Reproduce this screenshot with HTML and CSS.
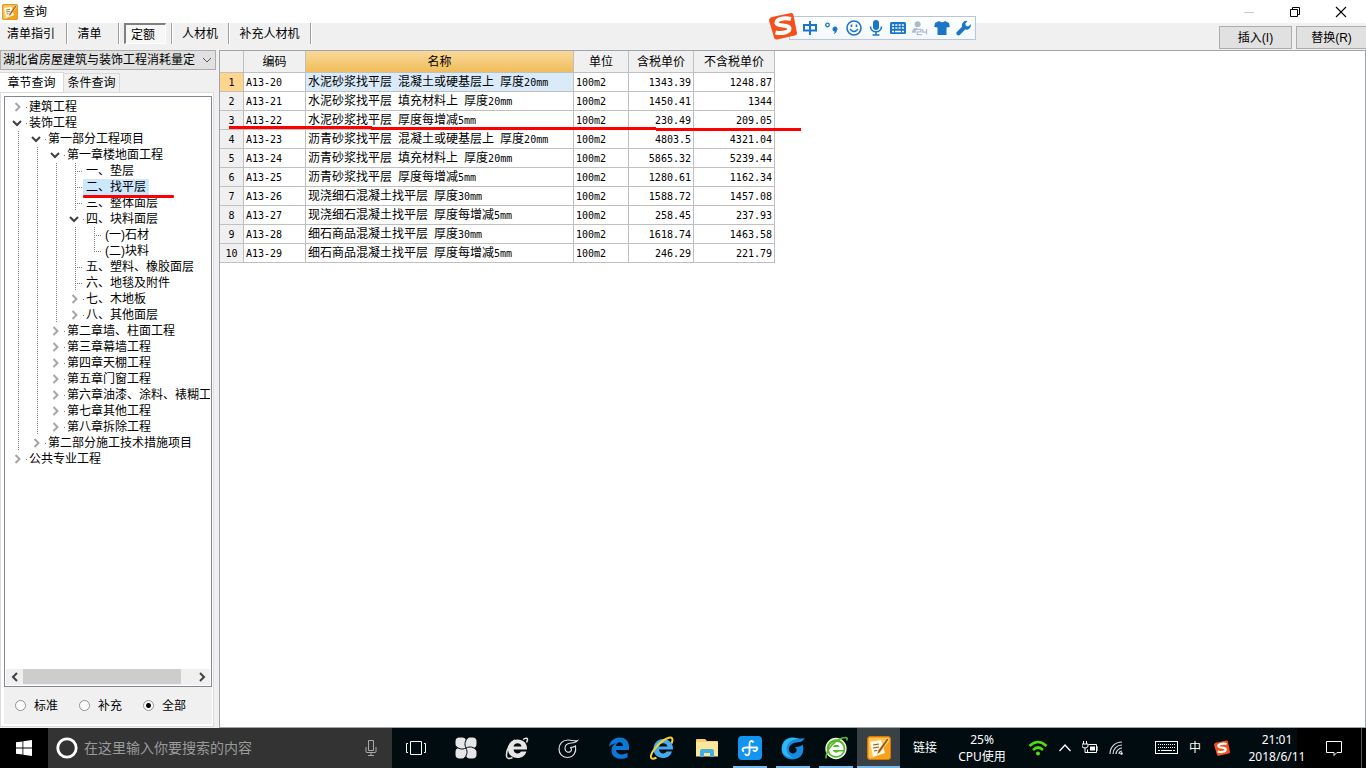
FILE: index.html
```html
<!DOCTYPE html>
<html lang="zh-CN">
<head>
<meta charset="utf-8">
<title>查询</title>
<link rel="stylesheet" href="styles.css">
</head>
<body>
<svg class="defs" aria-hidden="true">
  <symbol id="open" viewBox="0 0 10 10"><path d="M1 3l4 4 4-4" fill="none" stroke="#404040" stroke-width="2"/></symbol>
  <symbol id="shut" viewBox="0 0 10 10"><path d="M3.5 1l4 4-4 4" fill="none" stroke="#a6a6a6" stroke-width="2"/></symbol>
  <symbol id="sogou" viewBox="0 0 28 28">
    <path d="M3 5L22 1q2-.3 2.500 2L28 21q.3 2-2 2.500L8 27.500q-2.500.500-3-2L0 8.500Q0 6 3 5z" fill="#f4511e"/>
    <path d="M22 7c-6-1.500-14-.5-14.500 3.500-.5 4 13 2 13 6 0 4-8 5.500-14 4" fill="none" stroke="#fff" stroke-width="4"/>
  </symbol>
  <symbol id="note" viewBox="0 0 24 24">
    <rect x="0.500" y="0.500" width="23" height="23" rx="2.500" fill="#f7a21b" stroke="#d87508"/>
    <path d="M2 2h20v4L6 22H2z" fill="#ffc550"/>
    <path d="M3 6l11-2 4 13-12 4z" fill="#fffbe8"/>
    <path d="M6 9l6-1M6 12l6-1M7 15l3-.5" stroke="#8c5a20" stroke-width="1.200"/>
    <path d="M20 2l2 1.500-9 13-3 2 1-4z" fill="#9b5a1c" stroke="#fff0b8" stroke-width=".7"/>
  </symbol>
</svg>

<header class="titlebar">
  <svg class="app-icon"><use href="#note"/></svg>
  <h1>查询</h1>
  <div class="win-buttons">
    <button aria-label="最小化"><svg viewBox="0 0 12 12"><path d="M1 6.500h10" stroke="#c8c8c8"/></svg></button>
    <button aria-label="还原"><svg viewBox="0 0 12 12"><path d="M1.500 3.500h7v7h-7zM3.500 3.500v-2h7v7h-2" fill="none" stroke="#000"/></svg></button>
    <button aria-label="关闭"><svg viewBox="0 0 12 12"><path d="M1 1l10 10M11 1L1 11" stroke="#000" stroke-width="1.100"/></svg></button>
  </div>
</header>

<nav class="toolbar">
  <button class="mode wide">清单指引</button>
  <button class="mode">清单</button>
  <button class="mode pressed"><span>定额</span></button>
  <button class="mode third">人材机</button>
  <button class="mode last">补充人材机</button>
  <div class="actions">
    <button class="action">插入(I)</button>
    <button class="action">替换(R)</button>
  </div>
</nav>

<main class="main">
  <aside class="sidebar">
    <select class="library" aria-label="定额库"><option>湖北省房屋建筑与装饰工程消耗量定</option></select>
    <div class="tabs">
      <button class="tab active">章节查询</button><button class="tab">条件查询</button>
    </div>
    <section class="panel">
      <div class="tree-box">
        <ul class="tree">
          <li><div class="row"><svg><use href="#shut"/></svg><span>建筑工程</span></div></li>
          <li><div class="row"><svg><use href="#open"/></svg><span>装饰工程</span></div>
            <ul>
              <li><div class="row"><svg><use href="#open"/></svg><span>第一部分工程项目</span></div>
                <ul>
                  <li><div class="row"><svg><use href="#open"/></svg><span>第一章楼地面工程</span></div>
                    <ul>
                      <li><div class="row leaf"><span>一、垫层</span></div></li>
                      <li><div class="row leaf selected"><span>二、找平层</span><i class="mark"></i></div></li>
                      <li><div class="row leaf"><span>三、整体面层</span></div></li>
                      <li><div class="row"><svg><use href="#open"/></svg><span>四、块料面层</span></div>
                        <ul>
                          <li><div class="row leaf"><span>(一)石材</span></div></li>
                          <li><div class="row leaf end"><span>(二)块料</span></div></li>
                        </ul>
                      </li>
                      <li><div class="row leaf"><span>五、塑料、橡胶面层</span></div></li>
                      <li><div class="row leaf"><span>六、地毯及附件</span></div></li>
                      <li><div class="row"><svg><use href="#shut"/></svg><span>七、木地板</span></div></li>
                      <li><div class="row"><svg><use href="#shut"/></svg><span>八、其他面层</span></div></li>
                    </ul>
                  </li>
                  <li><div class="row"><svg><use href="#shut"/></svg><span>第二章墙、柱面工程</span></div></li>
                  <li><div class="row"><svg><use href="#shut"/></svg><span>第三章幕墙工程</span></div></li>
                  <li><div class="row"><svg><use href="#shut"/></svg><span>第四章天棚工程</span></div></li>
                  <li><div class="row"><svg><use href="#shut"/></svg><span>第五章门窗工程</span></div></li>
                  <li><div class="row"><svg><use href="#shut"/></svg><span>第六章油漆、涂料、裱糊工</span></div></li>
                  <li><div class="row"><svg><use href="#shut"/></svg><span>第七章其他工程</span></div></li>
                  <li><div class="row"><svg><use href="#shut"/></svg><span>第八章拆除工程</span></div></li>
                </ul>
              </li>
              <li><div class="row"><svg><use href="#shut"/></svg><span>第二部分施工技术措施项目</span></div></li>
            </ul>
          </li>
          <li><div class="row"><svg><use href="#shut"/></svg><span>公共专业工程</span></div></li>
        </ul>
        <div class="scrollbar">
          <button aria-label="向左"><svg viewBox="0 0 10 10"><path d="M7 1L3 5l4 4" fill="none" stroke="#404040" stroke-width="2"/></svg></button>
          <div class="track"><div class="thumb"></div></div>
          <button aria-label="向右"><svg viewBox="0 0 10 10"><path d="M3 1l4 4-4 4" fill="none" stroke="#404040" stroke-width="2"/></svg></button>
        </div>
      </div>
      <div class="filters">
        <label><input type="radio" name="scope">标准</label>
        <label><input type="radio" name="scope">补充</label>
        <label><input type="radio" name="scope" checked>全部</label>
      </div>
    </section>
  </aside>

  <section class="content">
    <div class="grid-wrap">
      <table class="grid">
        <colgroup><col class="c-no"><col class="c-code"><col class="c-name"><col class="c-unit"><col class="c-p1"><col class="c-p2"></colgroup>
        <thead><tr><th></th><th>编码</th><th class="sorted">名称</th><th>单位</th><th>含税单价</th><th>不含税单价</th></tr></thead>
        <tbody>
          <tr class="current"><th>1</th><td>A13-20</td><td><b>水泥砂浆找平层</b> <b>混凝土或硬基层上</b> <b>厚度</b>20mm</td><td>100m2</td><td>1343.39</td><td>1248.87</td></tr>
          <tr><th>2</th><td>A13-21</td><td><b>水泥砂浆找平层</b> <b>填充材料上</b> <b>厚度</b>20mm</td><td>100m2</td><td>1450.41</td><td>1344</td></tr>
          <tr><th>3</th><td>A13-22</td><td><b>水泥砂浆找平层</b> <b>厚度每增减</b>5mm</td><td>100m2</td><td>230.49</td><td>209.05</td></tr>
          <tr><th>4</th><td>A13-23</td><td><b>沥青砂浆找平层</b> <b>混凝土或硬基层上</b> <b>厚度</b>20mm</td><td>100m2</td><td>4803.5</td><td>4321.04</td></tr>
          <tr><th>5</th><td>A13-24</td><td><b>沥青砂浆找平层</b> <b>填充材料上</b> <b>厚度</b>20mm</td><td>100m2</td><td>5865.32</td><td>5239.44</td></tr>
          <tr><th>6</th><td>A13-25</td><td><b>沥青砂浆找平层</b> <b>厚度每增减</b>5mm</td><td>100m2</td><td>1280.61</td><td>1162.34</td></tr>
          <tr><th>7</th><td>A13-26</td><td><b>现浇细石混凝土找平层</b> <b>厚度</b>30mm</td><td>100m2</td><td>1588.72</td><td>1457.08</td></tr>
          <tr><th>8</th><td>A13-27</td><td><b>现浇细石混凝土找平层</b> <b>厚度每增减</b>5mm</td><td>100m2</td><td>258.45</td><td>237.93</td></tr>
          <tr><th>9</th><td>A13-28</td><td><b>细石商品混凝土找平层</b> <b>厚度</b>30mm</td><td>100m2</td><td>1618.74</td><td>1463.58</td></tr>
          <tr><th>10</th><td>A13-29</td><td><b>细石商品混凝土找平层</b> <b>厚度每增减</b>5mm</td><td>100m2</td><td>246.29</td><td>221.79</td></tr>
        </tbody>
      </table>
      <svg class="stroke" viewBox="0 0 574 6"><path d="M1 1.500h143M143 2.500h285M428 3.500h145" stroke="#f00" stroke-width="3"/></svg>
    </div>
  </section>
</main>

<div class="ime">
  <svg class="ime-logo"><use href="#sogou"/></svg>
  <div class="ime-bar">
    <svg viewBox="0 0 16 16"><path d="M2 5h12v5.500H2zM8 1v14" fill="none" stroke="#1b76c8" stroke-width="2"/></svg>
    <svg viewBox="0 0 16 16"><circle cx="3.500" cy="5" r="1.800" fill="none" stroke="#1b76c8" stroke-width="1.300"/><path d="M8.500 9a2.500 2.500 0 1 1 4.500 1.500c-.5 2-1.500 3-3.500 3.500.7-1 1.200-1.500 1.200-2.500-1.200 0-2.200-.8-2.200-2.500z" fill="#1b76c8"/></svg>
    <svg viewBox="0 0 16 16"><circle cx="8" cy="8" r="7" fill="none" stroke="#1b76c8" stroke-width="1.600"/><path d="M5.500 4.500v2.500M10.500 4.500v2.500" stroke="#1b76c8" stroke-width="1.600"/><path d="M4 9q4 5 8 0" fill="none" stroke="#1b76c8" stroke-width="1.400"/></svg>
    <svg viewBox="0 0 16 16"><rect x="5" y="0" width="6" height="10" rx="3" fill="#1b76c8"/><path d="M2.500 6.500c0 7 11 7 11 0M8 12v3M4.500 15h7" fill="none" stroke="#1b76c8" stroke-width="1.600"/></svg>
    <svg viewBox="0 0 16 16"><rect x="0" y="2" width="16" height="12" rx="1.500" fill="#1b76c8"/><path d="M2 5h12M2 8h12" stroke="#fff" stroke-width="1.600" stroke-dasharray="2 1.300"/><path d="M2 11.500h2M5 11.500h6M12 11.500h2" stroke="#fff" stroke-width="1.500"/></svg>
    <svg viewBox="0 0 17 16"><circle cx="6" cy="4" r="3.200" fill="#adb9cf"/><path d="M0 13q0-5 5-5h4v5z" fill="#adb9cf"/><path d="M5.500 9.500h4v2.500h-4v3h5M11.500 9v3.500h4M15.500 9v6" fill="none" stroke="#fff" stroke-width="3"/><path d="M5.500 9.500h4v2.500h-4v3h5M11.500 9v3.500h4M15.500 9v6" fill="none" stroke="#adb9cf" stroke-width="1.300"/></svg>
    <svg viewBox="0 0 16 16"><path d="M5 1q3 2.500 6 0l4 2 .8 4-3.300.5V15h-9V7.500L.2 7 1 3z" fill="#1b76c8"/></svg>
    <svg viewBox="0 0 16 16"><path d="M14.800 4.200l-2.600 2.200-2.300-.6-.6-2.300L11.600 1A4.600 4.600 0 0 0 6 6.700L1 11.800a2 2 0 0 0 3 3L9.200 9.600a4.600 4.600 0 0 0 5.600-5.400z" fill="#1b76c8"/></svg>
  </div>
</div>

<footer class="taskbar">
  <button class="start" aria-label="开始"><svg viewBox="0 0 16 16"><path d="M0 2.300L6.500 1.400v6.200H0zM7.300 1.300L16 0v7.600H7.300zM0 8.400h6.500v6.200L0 13.700zM7.300 8.400H16V16l-8.700-1.300z" fill="#fff"/></svg></button>
  <div class="search">
    <svg class="cortana" viewBox="0 0 22 22"><circle cx="11" cy="11" r="9.200" fill="none" stroke="#fff" stroke-width="2.800"/></svg>
    <input type="text" placeholder="在这里输入你要搜索的内容" aria-label="搜索">
    <svg class="mic" viewBox="0 0 12 18"><path d="M3.500 1.500h5v10h-5zM1 8v4.500q0 1 1 1h8q1 0 1-1V8M6 14v3M3 16.500h6" fill="none" stroke="#aaa"/></svg>
  </div>
  <button class="task view" aria-label="任务视图"><svg viewBox="0 0 22 16"><path d="M5.500 1.500h11v13h-11zM3 3.500H1.500v9H3M19 3.500h1.500v9H19" fill="none" stroke="#fff"/></svg></button>
  <button class="task" aria-label="应用"><svg viewBox="0 0 24 24"><rect x="1.500" y="1.500" width="10.500" height="10.500" rx="4" fill="#e6e6e6"/><rect x="12" y="1.500" width="10.500" height="10.500" rx="4" fill="#e6e6e6"/><rect x="1.500" y="12" width="10.500" height="10.500" rx="4" fill="#e6e6e6"/><rect x="12" y="12" width="10.500" height="10.500" rx="4" fill="#e6e6e6"/><circle cx="12" cy="12" r="5" fill="#e6e6e6"/><path d="M12 12C8 14 4 13 1.500 9.500M12 12C10 8 11 4 14.500 1.500M12 12c4-2 8-1 10.500 2.500M12 12c2 4 1 8-2.500 10.500" fill="none" stroke="#000c10" stroke-width="1"/></svg></button>
  <button class="task" aria-label="浏览器"><svg viewBox="0 0 24 24"><path d="M22 13.500H8.500c.3 4.500 6 5 7.500 2h5.500C20 20 16.500 22 12.500 22 7 22 3 18.500 3 13S7 3.500 12.500 3.500 22.500 7 22 13.500zM8.500 10.500h8c-.3-4.500-7.500-4.500-8 0z" fill="#e6e6e6"/><path d="M18 3.500c2-1.500 4.500-2 4.500 0 0 1-.5 2-1 3M10 4C5 7 1 14 1.500 20c.3 3 3 3 6 1.500" fill="none" stroke="#e6e6e6" stroke-width="1.500"/></svg></button>
  <button class="task" aria-label="加速器"><svg viewBox="0 0 24 24"><path d="M21.500 4.500c-1.500 2-3.500 2.500-6 2.500C11 7 8.500 9.500 9 13c.4 3 3.500 4 5.500 2.500 1.500-1.200 1.200-3.500-.5-4 3 0 4-.5 5.500-1.500 1 6-1.500 11-7.500 11.500C6.500 21.500 3 18 3 13S6.500 4 12 4c4 0 6 1.500 9.500.5z" fill="none" stroke="#dfe2e2" stroke-width="1.200"/></svg></button>
  <button class="task" aria-label="Edge"><svg viewBox="0 0 24 24"><path d="M2 11C3 4 8 1.500 13 1.500c6 0 9 4.500 9 9.500v3H9c.5 5 7 5.500 11.500 2.700v4.500C13 25 4.500 22 4.500 14.500 4.500 11 6.500 8.500 9 7.500 6 7.500 3.500 9 2 11zm7-1h7c0-5-6.500-5-7 0z" fill="#0b78d7"/></svg></button>
  <button class="task ie" aria-label="IE"><svg viewBox="0 0 24 24"><path d="M23 13.500H9c.3 4.500 6 5 7.500 2H22C20.500 20 17 22 13 22 7.500 22 3.500 18.500 3.500 13S7.500 3 13 3 23.500 7 23 13.500zM9 10.500h8.500C17 6 9.500 6 9 10.500z" fill="#45aaf0"/><path d="M21.500 7.500C23.500 3 22.500 0 17 2.500 9 6 0 17 1 21.500c.5 1.800 3 1.300 5.500.3" fill="none" stroke="#f9d030" stroke-width="2"/></svg></button>
  <button class="task small" aria-label="文件夹"><svg viewBox="0 0 24 24"><path d="M1 4q0-1 1-1h8l2 2h10q1 0 1 1v14H1z" fill="#f6cf70"/><path d="M1 6h22v14.500H1z" fill="#fde599"/><path d="M5 21v-6q0-2 2-2h10q2 0 2 2v6h-4v-4H9v4z" fill="#3fb0e0"/></svg></button>
  <button class="task small running" aria-label="计价软件"><svg viewBox="0 0 24 24"><rect width="24" height="24" rx="4" fill="#1295f2"/><path d="M15.500 6.500C14 4 11.500 5 11.500 7.500V16c0 4-4 4-4.500 1.500M19.500 11.500h-11C4 11.500 3.500 14.500 6 15.500M19.500 11.500c0 3.500-3 4.500-4.500 2.500" fill="none" stroke="#fff" stroke-width="1.800"/></svg></button>
  <button class="task small running" aria-label="下载"><svg viewBox="0 0 24 24"><path d="M23.500 2c-1 3.500-4 4-8 4.500C11 7 7.500 10 8 14c.5 3.500 5 4.500 7 2 1.500-2 .5-4-1.500-4.500 3-.5 6.500-1 8-3C24 15 21 23.500 11.500 23.500 5 23.500.5 19 .5 13S4 1.500 11 1.500c5 0 8 2 12.500.5z" fill="#1689e0"/><path d="M5 4c5-3 9-2.500 13-1C9 3 4 9 6 16c1 3 4 5 6 5.500C6 22 1 18 1 13c0-4 1.500-7 4-9z" fill="#2fb9f0"/></svg></button>
  <button class="task small running" aria-label="安全浏览器"><svg viewBox="0 0 24 24"><circle cx="12" cy="12.500" r="10" fill="#58b82c" stroke="#f2fbea" stroke-width="1.300"/><path d="M19.500 14H9c.5 3 4.500 3.500 6 1.500h4c-1 3-4 4.500-7 4.500-4.500 0-7-3-7-7s3-7 7.500-7 7.500 3 7 8zM9 11h6.500c-.5-3-6-3-6.500 0z" fill="#fff"/><path d="M2 22.500C2 13 12 2 22 1.500c1.500 0 1.500 1.500.5 3" fill="none" stroke="#58b82c" stroke-width="1.500"/></svg></button>
  <button class="task small running active" aria-label="查询"><svg><use href="#note"/></svg></button>
  <div class="links">链接</div>
  <div class="cpu">25%<br>CPU使用</div>
  <div class="tray">
    <svg class="w20" viewBox="0 0 20 16"><path d="M1.500 6q8.500-8 17 0M5 10q5-5 10 0" fill="none" stroke="#4fdc0a" stroke-width="2.600"/><circle cx="10" cy="13.500" r="2" fill="#4fdc0a"/></svg>
    <svg class="w12" viewBox="0 0 12 16"><path d="M.5 11L6 5l5.500 6" fill="none" stroke="#fff" stroke-width="1.300"/></svg>
    <svg class="w16" viewBox="0 0 16 16"><path d="M6.500 4.500h8v8h-9v-3M14.500 7h1.500v3h-1.500" fill="none" stroke="#fff"/><path d="M8 6.500h5v4H8z" fill="#fff"/><path d="M1.500 1v3M4.500 1v3M0 4h6v2q0 2-3 2-3 0-3-2zM3 8v4.500h3" fill="none" stroke="#fff"/></svg>
    <svg class="w14" viewBox="0 0 14 16"><g fill="none" stroke="#ddd" stroke-width="1.200"><path d="M1 14C1 7 6 2 13 2"/><path d="M4 14c0-5 4-9 9-9"/><path d="M7 14c0-3 3-6 6-6"/><path d="M10 14c0-2 1-3 3-3"/></g><circle cx="12.500" cy="13.500" r="1.200" fill="#fff"/></svg>
    <svg class="w23" viewBox="0 0 23 14"><rect x=".5" y=".5" width="22" height="12" fill="none" stroke="#fff"/><path d="M3 3.500h17M3 6.500h17" stroke="#fff" stroke-dasharray="1 1"/><path d="M3 9.500h2M6 9.500h11M18 9.500h2" stroke="#fff"/></svg>
    <span class="lang">中</span>
    <svg class="w16" viewBox="0 0 28 28"><use href="#sogou"/></svg>
  </div>
  <div class="clock">21:01<br>2018/6/11</div>
  <button class="notice" aria-label="通知"><svg viewBox="0 0 16 16"><path d="M.5 1.500h15v11H11l-3 3v-3H.5z" fill="none" stroke="#fff"/></svg></button>
</footer>
</body>
</html>
```

FILE: styles.css
```css
* { box-sizing: border-box; }
html, body { height: 100%; }
body {
  margin: 0;
  display: flex;
  flex-direction: column;
  overflow: hidden;
  background: #f0f0f0;
  color: #000;
  font: 12px/16px "Liberation Sans", "Noto Sans CJK SC", sans-serif;
}
button, input, select { font: inherit; color: inherit; margin: 0; padding: 0; border: 0; background: none; }
svg { display: block; flex: none; }
.defs { position: absolute; width: 0; height: 0; }

/* title bar */
.titlebar { flex: none; display: flex; align-items: center; height: 23px; padding-left: 2px; background: #fff; }
.app-icon { width: 16px; height: 16px; }
.titlebar h1 { margin: 0 0 0 5px; font-size: 12px; font-weight: normal; }
.win-buttons { display: flex; margin-left: auto; padding-right: 2px; }
.win-buttons button { width: 46px; height: 20px; display: grid; place-items: center; }
.win-buttons svg { width: 12px; height: 12px; }

/* mode toolbar */
.toolbar { flex: none; display: flex; height: 27px; align-items: flex-start; }
.mode { height: 21px; width: 52px; padding-right: 6px; border-right: 1px solid #a0a0a0; box-shadow: 1px 0 #fff; }
.mode.wide { width: 67px; padding: 0 4px 0 0; }
.mode.pressed { width: 53px; padding: 0 5px; }
.pressed span { display: block; height: 21px; padding: 2px 0 0 5px; text-align: left; border: 1px solid #fff; border-top: 2px solid #808080; border-left: 2px solid #808080; background: #f7f7f7; }
.mode.third { width: 57px; padding: 0 2px; }
.mode.last { width: 82px; padding: 0; }
.actions { display: flex; gap: 4px; margin-left: auto; padding-top: 3px; }
.action { width: 73px; height: 23px; border: 1px solid #adadad; background: #e1e1e1; }
.action:last-child { width: 70px; border-right: 0; }

/* layout */
.main { flex: 1; min-height: 0; display: flex; gap: 3px; }
.sidebar { flex: none; width: 216px; display: flex; flex-direction: column; }
.library {
  height: 20px;
  padding: 0 20px 0 2px;
  border: 1px solid #adadad;
  border-radius: 0;
  appearance: none;
  background: #e1e1e1 url("data:image/svg+xml,%3Csvg xmlns='http://www.w3.org/2000/svg' width='10' height='6'%3E%3Cpath d='M1 1l4 4 4-4' fill='none' stroke='%23555'/%3E%3C/svg%3E") no-repeat right 3px center;
}
.tabs { display: flex; align-items: flex-end; height: 22px; padding-top: 2px; }
.tab { width: 56px; height: 19px; border: 1px solid #d9d9d9; border-left: 0; border-bottom: 0; }
.tab.active { width: 64px; height: 20px; background: #fff; }
.panel { flex: 1; min-height: 0; display: flex; flex-direction: column; margin: 0 2px 1px 0; padding: 3px 1px 2px 3px; border: 1px solid #dcdcdc; background: #fff; }
.tree-box { flex: 1; min-height: 0; display: flex; flex-direction: column; padding: 1px; border: 1px solid #828790; overflow: hidden; }

/* chapter tree */
.tree { flex: 1; min-height: 0; overflow: hidden; }
.tree, .tree ul { margin: 0; padding: 0; list-style: none; }
.tree { padding: 1px 0 0 5px; }
.tree ul { padding-left: 19px; }
.tree li:not(:last-child) > ul { background: linear-gradient(#808080 50%, transparent 50%) 7px 0 / 1px 2px repeat-y; }
.row { position: relative; display: flex; align-items: center; height: 16px; white-space: nowrap; }
.row svg { width: 10px; height: 10px; margin: 0 6px 0 1px; }
.row svg + span { padding-left: 1px; }
.row svg + span::before { content: ""; position: absolute; left: 15px; top: 8px; width: 1px; height: 1px; background: #808080; }
.row.leaf {
  padding-left: 15px;
  background:
    linear-gradient(#808080 50%, transparent 50%) 7px 0 / 1px 2px repeat-y,
    linear-gradient(90deg, #808080 50%, transparent 50%) 7px 8px / 2px 1px repeat-x;
}
.row.leaf::before { content: ""; position: absolute; left: 0; top: 8px; width: 7px; height: 1px; background: #fff; }
.row.leaf span { flex: 1; padding: 0 3px; background: #fff; }
.row.leaf.selected span { flex: none; background: #cce8ff; }
.row.leaf.selected::after { content: ""; flex: 1; align-self: stretch; background: #fff; }
.row.leaf.end {
  background-image: repeating-linear-gradient(#808080 0 1px, transparent 1px 2px), linear-gradient(90deg, #808080 50%, transparent 50%);
  background-repeat: no-repeat, repeat-x;
  background-size: 1px 8px, 2px 1px;
}
.mark { position: absolute; z-index: 1; left: 15px; top: 16px; width: 91px; height: 3px; border-radius: 1px; background: #f00; }
.scrollbar { flex: none; display: flex; height: 16px; background: #f0f0f0; }
.scrollbar button { width: 17px; display: grid; place-items: center; }
.scrollbar svg { width: 10px; height: 10px; }
.track { flex: 1; }
.thumb { width: 93%; height: 15px; background: #cdcdcd; }

.filters { flex: none; display: flex; gap: 12px; height: 37px; padding-left: 11px; align-items: center; background: #f0f0f0; }
.filters label { display: flex; align-items: center; width: 52px; gap: 8px; white-space: nowrap; }
.filters input { appearance: none; flex: none; width: 11px; height: 11px; border: 1px solid #909090; border-radius: 50%; background: #fff; }
.filters input:checked { background: radial-gradient(#000 0 2px, #fff 3px); }

/* price grid */
.content { flex: 1; min-width: 0; border: 1px solid #a0a4ac; background: #fff; }
.grid-wrap { position: relative; width: max-content; }
.grid { table-layout: fixed; width: 555px; border-collapse: separate; border-spacing: 0; font: 10px/17px "DejaVu Sans Mono", "Noto Sans CJK SC", monospace; }
.c-no { width: 24px; }
.c-code { width: 62px; }
.c-name { width: 268px; }
.c-unit { width: 55px; }
.c-p1 { width: 65px; }
.c-p2 { width: 81px; }
.grid th, .grid td { height: 19px; padding: 1px 2px 0; border-right: 1px solid #c0c0c0; border-bottom: 1px solid #c0c0c0; text-align: left; white-space: nowrap; }
.grid th { background: #f0f0f0; font-weight: normal; text-align: center; }
.grid thead th { height: 22px; padding: 1px 0 0; font: 12px/20px "Liberation Sans", "Noto Sans CJK SC", sans-serif; }
.grid thead th.sorted { background: linear-gradient(#f9d99a, #f0bd5a); }
.grid td:nth-child(n+5) { text-align: right; }
.grid b { font: 12px/12px "Noto Sans CJK SC", sans-serif; }
.grid .current th { background: #ffd58d; }
.current td:nth-child(3) { background: #d9eaf9; }
.stroke { position: absolute; left: 8px; top: 75px; width: 574px; height: 6px; }

/* floating input method bar */
.ime { position: absolute; left: 769px; top: 12px; display: flex; }
.ime-logo { position: relative; z-index: 1; width: 28px; height: 28px; }
.ime-bar { display: flex; align-items: center; gap: 6px; height: 24px; margin: 4px 0 0 -8px; padding: 0 3px 0 12px; border: 1px solid #b5c7d9; background: linear-gradient(#fff, #f3f8fd); }
.ime-bar svg { width: 16px; height: 16px; }

/* taskbar */
.taskbar { flex: none; display: flex; align-items: stretch; height: 40px; color: #fff; background: linear-gradient(to left, #000 69px, #000c10 69px); }
.start { width: 48px; display: grid; place-items: center; background: #000; }
.start svg { width: 16px; height: 16px; }
.search { display: flex; align-items: center; width: 344px; padding: 0 15px 0 8px; background: #333; }
.cortana { width: 22px; height: 22px; }
.search input { flex: 1; min-width: 0; margin: 0 6px; font-size: 14px; line-height: 20px; }
.search input::placeholder { color: #9a9a9a; opacity: 1; }
.mic { width: 12px; height: 18px; }
.task { flex: none; width: 51px; display: grid; place-items: center; }
.task svg { width: 24px; height: 24px; }
.task.view { width: 48px; }
.task.view svg { width: 22px; height: 16px; }
.task.ie { width: 36px; margin-right: 5px; }
.task.small { width: 43px; }
.running { background: linear-gradient(#76b9ed, #76b9ed) center bottom / 34px 2px no-repeat; }
.running.active { background: linear-gradient(#76b9ed, #76b9ed) center bottom / 100% 2px no-repeat #3a4144; }
.links { display: flex; align-items: center; padding-left: 13px; }
.cpu, .clock { padding-top: 3px; line-height: 17px; text-align: center; font-family: "Noto Sans", "Noto Sans CJK SC", sans-serif; }
.cpu { width: 66px; margin-left: 12px; }
.tray { flex: 1; display: flex; align-items: center; gap: 11px; margin-left: 13px; }
.w20 { width: 20px; height: 16px; }
.w12 { width: 12px; height: 16px; }
.w16 { width: 16px; height: 16px; }
.w14 { width: 14px; height: 16px; }
.w23 { width: 23px; height: 14px; margin-left: 21px; }
.lang { margin-right: 2px; }
.clock { width: 74px; }
.notice { width: 48px; margin-right: 4px; padding-right: 8px; display: grid; place-items: center; border-right: 1px solid #555; }
.notice svg { width: 16px; height: 16px; }
```
